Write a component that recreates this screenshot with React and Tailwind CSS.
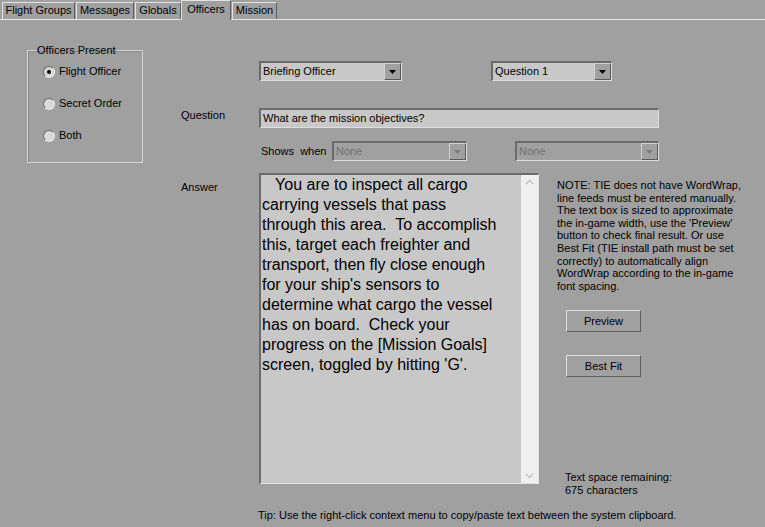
import React from 'react'

const answer = `   You are to inspect all cargo
carrying vessels that pass
through this area.  To accomplish
this, target each freighter and
transport, then fly close enough
for your ship's sensors to
determine what cargo the vessel
has on board.  Check your
progress on the [Mission Goals]
screen, toggled by hitting 'G'.`

const note = `NOTE: TIE does not have WordWrap,
line feeds must be entered manually.
The text box is sized to approximate
the in-game width, use the 'Preview'
button to check final result. Or use
Best Fit (TIE install path must be set
correctly) to automatically align
WordWrap according to the in-game
font spacing.`

const tabs = [
  { label: 'Flight Groups', w: 'w-[73px]' },
  { label: 'Messages', w: 'w-[58px] ml-[1px]' },
  { label: 'Globals', w: 'w-[46px] ml-[1px]' },
  { label: 'Officers', w: 'w-[50px]', active: true },
  { label: 'Mission', w: 'w-[45px] ml-[1px]' },
]

function Arrow({ color }) {
  return (
    <svg width="7" height="4" viewBox="0 0 7 4">
      <path d="M0 0h7L3.5 4z" fill={color} />
    </svg>
  )
}

function Combo({ className, text, disabled }) {
  return (
    <div
      className={`flex h-[20px] border-t-2 border-l-2 border-r border-b border-t-[#6b6b6b] border-l-[#6b6b6b] border-r-[#dedede] border-b-[#dedede] ${
        disabled ? 'bg-[#a0a0a0] text-[#727272]' : 'bg-[#c8c8c8] text-black'
      } ${className}`}
    >
      <span className="flex-1 pl-[2px] leading-[17px]">{text}</span>
      <div className="flex w-[17px] items-center justify-center border-t border-l border-r border-b border-t-[#d4d4d4] border-l-[#d4d4d4] border-r-[#5a5a5a] border-b-[#5a5a5a] bg-[#a0a0a0]">
        <Arrow color={disabled ? '#7c7c7c' : '#000'} />
      </div>
    </div>
  )
}

function Radio({ label, checked }) {
  return (
    <div className="flex h-[13px] items-center gap-[4px]">
      <div className="flex h-[12px] w-[12px] items-center justify-center rounded-full border border-t-[#6b6b6b] border-l-[#6b6b6b] border-r-[#e8e8e8] border-b-[#e8e8e8] bg-[#d8d8d8]">
        {checked && <div className="h-[4px] w-[4px] rounded-full bg-black" />}
      </div>
      <span>{label}</span>
    </div>
  )
}

function Button({ children, className }) {
  return (
    <div
      className={`flex h-[22px] w-[75px] items-center justify-center border border-t-[#e0e0e0] border-l-[#e0e0e0] border-r-[#5e5e5e] border-b-[#5e5e5e] bg-[#a0a0a0] ${className}`}
    >
      {children}
    </div>
  )
}

export default function App() {
  return (
    <div className="flex h-[527px] w-[765px] flex-col overflow-hidden bg-[#a0a0a0] font-['Liberation_Sans',Arial,sans-serif] text-[11px] leading-[13px] text-black">
      {/* tab strip */}
      <div className="flex h-[20px] shrink-0 items-end border-b border-[#e3e3e3] pl-[2px]">
        {tabs.map((t) =>
          t.active ? (
            <div
              key={t.label}
              className={`relative z-10 -mb-px flex h-[20px] justify-center border-t border-l border-r border-t-[#e3e3e3] border-l-[#e3e3e3] border-r-[#5e5e5e] bg-[#a0a0a0] pt-[2px] ${t.w}`}
            >
              {t.label}
            </div>
          ) : (
            <div
              key={t.label}
              className={`flex h-[17px] justify-center border-t border-l border-r border-t-[#e3e3e3] border-l-[#e3e3e3] border-r-[#5e5e5e] pt-[1px] ${t.w}`}
            >
              {t.label}
            </div>
          )
        )}
      </div>

      <div className="flex flex-1">
        {/* left column */}
        <div className="w-[181px] shrink-0 pl-[27px] pt-[24px]">
          <fieldset className="h-[119px] w-[116px] border border-[#d6d6d6] shadow-[inset_1px_1px_0_#8a8a8a]">
            <legend className="ml-[8px] px-[1px]">Officers Present</legend>
            <div className="flex flex-col gap-[19px] pl-[15px] pt-[8px]">
              <Radio label="Flight Officer" checked />
              <Radio label="Secret Order" />
              <Radio label="Both" />
            </div>
          </fieldset>
        </div>

        {/* right column */}
        <div className="flex flex-1 flex-col pt-[41px]">
          <div className="flex pl-[78px]">
            <Combo className="w-[143px]" text="Briefing Officer" />
            <Combo className="ml-[89px] w-[121px]" text="Question 1" />
          </div>

          <div className="mt-[27px] flex items-start">
            <span className="w-[78px] pt-px">Question</span>
            <div className="h-[20px] w-[400px] border-t-2 border-l-2 border-r border-b border-t-[#6b6b6b] border-l-[#6b6b6b] border-r-[#dedede] border-b-[#dedede] bg-[#c8c8c8] pl-[2px] leading-[17px]">
              What are the mission objectives?
            </div>
          </div>

          <div className="mt-[13px] flex items-center pl-[80px]">
            <span className="w-[71px] whitespace-pre">Shows  when</span>
            <Combo className="w-[135px]" text="None" disabled />
            <Combo className="ml-[48px] w-[144px]" text="None" disabled />
          </div>

          <div className="mt-[12px] flex">
            <span className="w-[78px] pt-[8px]">Answer</span>
            <div className="flex h-[311px] w-[280px] border-t-2 border-l-2 border-r border-b border-t-[#6b6b6b] border-l-[#6b6b6b] border-r-[#e3e3e3] border-b-[#e3e3e3] bg-[#c8c8c8]">
              <div className="flex-1 whitespace-pre pl-[1px] text-[16px] leading-[20px]">{answer}</div>
              <div className="flex w-[17px] flex-col items-center justify-between bg-[#f0f0f0] py-[4px]">
                <svg width="9" height="6" viewBox="0 0 9 6">
                  <path d="M1 5l3.5-3.5L8 5" fill="none" stroke="#bdbdbd" strokeWidth="1.3" />
                </svg>
                <svg width="9" height="6" viewBox="0 0 9 6">
                  <path d="M1 1l3.5 3.5L8 1" fill="none" stroke="#bdbdbd" strokeWidth="1.3" />
                </svg>
              </div>
            </div>
            <div className="ml-[18px] flex flex-col pt-[6px]">
              <div className="whitespace-pre leading-[12.6px]">{note}</div>
              <Button className="ml-[9px] mt-[18px]">Preview</Button>
              <Button className="ml-[9px] mt-[23px]">Best Fit</Button>
              <div className="ml-[8px] mt-auto mb-[-13px]">
                <div>Text space remaining:</div>
                <div>675 characters</div>
              </div>
            </div>
          </div>

          <div className="mt-[25px] pl-[77px]">
            Tip: Use the right-click context menu to copy/paste text between the system clipboard.
          </div>
        </div>
      </div>
    </div>
  )
}
